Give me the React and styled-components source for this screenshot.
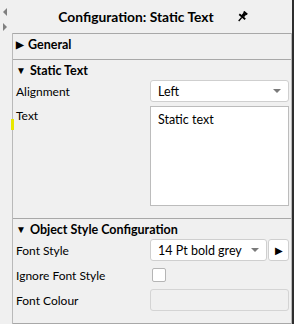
import styled, { createGlobalStyle } from "styled-components";

const GlobalStyle = createGlobalStyle`
    html, body {
        margin: 0;
        padding: 0;
        background: #f0f0f0;
    }
    body {
        font-family: Lato, "Noto Sans", sans-serif;
        color: #000;
    }
`;

function PinIcon() {
    return (
        <svg width="11" height="12" viewBox="0 0 11 12">
            <g transform="rotate(40 5.5 5.5)">
                <rect x="3.2" y="0" width="4.6" height="1.8" fill="#000" />
                <rect x="3.8" y="1.6" width="3.4" height="3.6" fill="#000" />
                <rect x="1.6" y="5" width="7.8" height="1.8" fill="#000" />
                <rect x="4.8" y="6.6" width="1.4" height="4.8" fill="#000" />
            </g>
        </svg>
    );
}

function Section({ title, open, children }) {
    return (
        <SectionBox $open={open}>
            <SectionHeader>
                <Caret>{open ? "▼" : "▶"}</Caret>
                {title}
            </SectionHeader>
            {children}
        </SectionBox>
    );
}

export default function App() {
    return (
        <>
            <GlobalStyle />
            <Page>
                <SideStrip>
                    <SideArrow $dir="left" />
                    <SideArrow $dir="right" />
                </SideStrip>
                <Main>
                    <Title>
                        <span>Configuration: Static Text</span>
                        <PinIcon />
                    </Title>
                    <Panel>
                        <Marker />
                        <Section title="General" open={false} />
                        <Section title="Static Text" open>
                            <Rows>
                                <Row>
                                    <Label>Alignment</Label>
                                    <Select>
                                        <span>Left</span>
                                        <DropArrow />
                                    </Select>
                                </Row>
                                <Row $tall>
                                    <Label $top>Text</Label>
                                    <TextArea>Static text</TextArea>
                                </Row>
                            </Rows>
                        </Section>
                        <Section title="Object Style Configuration" open>
                            <Rows>
                                <Row>
                                    <Label>Font Style</Label>
                                    <Combo>
                                        <Select $grow>
                                            <span>14 Pt bold grey</span>
                                            <DropArrow />
                                        </Select>
                                        <PlayButton>▶</PlayButton>
                                    </Combo>
                                </Row>
                                <Row>
                                    <Label>Ignore Font Style</Label>
                                    <CheckCell>
                                        <Checkbox />
                                    </CheckCell>
                                </Row>
                                <Row>
                                    <Label>Font Colour</Label>
                                    <ColourBox />
                                </Row>
                            </Rows>
                        </Section>
                    </Panel>
                </Main>
                <EdgeBar />
            </Page>
        </>
    );
}

// STYLING
const Page = styled.div`
    display: flex;
    width: 294px;
    height: 324px;
    background: #f0f0f0;
    overflow: hidden;
`;

const SideStrip = styled.div`
    width: 12px;
    flex-shrink: 0;
    display: flex;
    flex-direction: column;
    align-items: center;
    gap: 7px;
    padding-top: 8px;
    box-sizing: border-box;
    padding-right: 3px;
`;

const SideArrow = styled.div`
    width: 0;
    height: 0;
    border-top: 4px solid transparent;
    border-bottom: 4px solid transparent;
    ${({ $dir }) => $dir === "left"
        ? "border-right: 4px solid #808080;"
        : "border-left: 4px solid #808080;"}
`;

const Main = styled.div`
    flex: 1;
    display: flex;
    flex-direction: column;
    min-width: 0;
`;

const Title = styled.div`
    height: 33px;
    display: flex;
    align-items: center;
    justify-content: center;
    gap: 23px;
    padding-left: 2px;
    font-weight: 700;
    font-size: 13.8px;
`;

const Panel = styled.div`
    position: relative;
    flex: 1;
    border-left: 1px solid #b9b9b9;
    border-right: 1px solid #b9b9b9;
`;

const Marker = styled.div`
    position: absolute;
    left: -2px;
    top: 86px;
    width: 3px;
    height: 11px;
    background: #e8e800;
`;

const SectionBox = styled.div`
    border-top: 1px solid #a8a8a8;
    padding-bottom: ${({ $open }) => ($open ? "12px" : "5px")};
    &:last-child {
        border-bottom: 1px solid #a8a8a8;
    }
`;

const SectionHeader = styled.div`
    height: 20px;
    display: flex;
    align-items: center;
    padding-left: 3px;
    font-weight: 700;
    font-size: 12.5px;
`;

const Caret = styled.span`
    font-size: 10px;
    margin-right: 4px;
`;

const Rows = styled.div`
    display: flex;
    flex-direction: column;
    gap: 3px;
    padding: 0 2px 0 2px;
`;

const Row = styled.div`
    display: grid;
    grid-template-columns: 135px 139px;
    align-items: ${({ $tall }) => ($tall ? "start" : "center")};
    min-height: 22px;
    ${({ $tall }) => $tall && "margin-top: 1px;"}
`;

const Label = styled.div`
    font-size: 12px;
    padding-left: 1px;
    ${({ $top }) => $top && "padding-top: 2px;"}
`;

const Select = styled.div`
    ${({ $grow }) => $grow && "flex: 1;"}
    height: 22px;
    box-sizing: border-box;
    display: flex;
    align-items: center;
    justify-content: space-between;
    padding: 0 7px;
    background: #fff;
    border: 1px solid #cfcfcf;
    border-radius: 3px;
    font-size: 12.5px;
`;

const DropArrow = styled.span`
    width: 0;
    height: 0;
    border-left: 4px solid transparent;
    border-right: 4px solid transparent;
    border-top: 4px solid #7a7a7a;
`;

const TextArea = styled.div`
    height: 100px;
    box-sizing: border-box;
    padding: 5px 7px;
    background: #fff;
    border: 1px solid #bcbcbc;
    font-size: 12.5px;
`;

const Combo = styled.div`
    display: flex;
    gap: 1px;
`;

const PlayButton = styled.div`
    width: 21px;
    height: 22px;
    box-sizing: border-box;
    display: flex;
    align-items: center;
    justify-content: center;
    background: #fff;
    border: 1px solid #cfcfcf;
    border-radius: 3px;
    font-size: 10px;
`;

const CheckCell = styled.div`
    display: flex;
    padding-left: 2px;
`;

const Checkbox = styled.div`
    width: 14px;
    height: 14px;
    box-sizing: border-box;
    background: #fff;
    border: 1px solid #b5b5b5;
    border-radius: 2px;
`;

const ColourBox = styled.div`
    height: 22px;
    box-sizing: border-box;
    background: #f0f0f0;
    border: 1px solid #d4d4d4;
    border-radius: 3px;
`;

const EdgeBar = styled.div`
    width: 2px;
    flex-shrink: 0;
    background: #2e2e2e;
`;
